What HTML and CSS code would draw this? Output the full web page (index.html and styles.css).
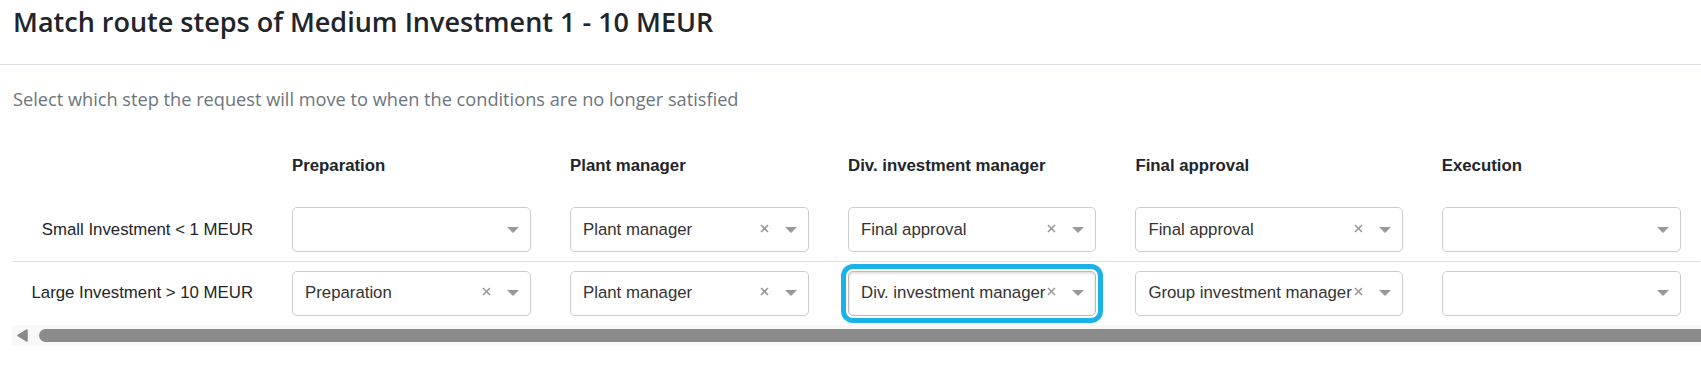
FILE: index.html
```html
<!DOCTYPE html>
<html lang="en">
<head>
    <meta charset="UTF-8">
    <meta name="viewport" content="width=device-width, initial-scale=1.0">
    <title>Match route steps</title>
    <link rel="stylesheet" href="styles.css">
</head>
<body>
    <div class="page-header">
        <h1>Match route steps of Medium Investment 1 - 10 MEUR</h1>
    </div>

    <div class="content">
        <p class="hint">Select which step the request will move to when the conditions are no longer satisfied</p>

        <div class="table-wrap">
            <table class="steps">
                <thead>
                    <tr>
                        <th></th>
                        <th>Preparation</th>
                        <th>Plant manager</th>
                        <th>Div. investment manager</th>
                        <th>Final approval</th>
                        <th>Execution</th>
                    </tr>
                </thead>
                <tbody>
                    <tr class="row">
                        <td class="label">Small Investment &lt; 1 MEUR</td>
                        <td>
                            <div class="select">
                                <span class="value"></span>
                                <svg class="arrow" width="12" height="6" viewBox="0 0 12 6"><path d="M0 0h12L6 6z"/></svg>
                            </div>
                        </td>
                        <td>
                            <div class="select">
                                <span class="value">Plant manager</span>
                                <svg class="clear" width="9" height="9" viewBox="0 0 9 9"><path d="M1 1l7 7M8 1L1 8"/></svg>
                                <svg class="arrow" width="12" height="6" viewBox="0 0 12 6"><path d="M0 0h12L6 6z"/></svg>
                            </div>
                        </td>
                        <td>
                            <div class="select">
                                <span class="value">Final approval</span>
                                <svg class="clear" width="9" height="9" viewBox="0 0 9 9"><path d="M1 1l7 7M8 1L1 8"/></svg>
                                <svg class="arrow" width="12" height="6" viewBox="0 0 12 6"><path d="M0 0h12L6 6z"/></svg>
                            </div>
                        </td>
                        <td>
                            <div class="select">
                                <span class="value">Final approval</span>
                                <svg class="clear" width="9" height="9" viewBox="0 0 9 9"><path d="M1 1l7 7M8 1L1 8"/></svg>
                                <svg class="arrow" width="12" height="6" viewBox="0 0 12 6"><path d="M0 0h12L6 6z"/></svg>
                            </div>
                        </td>
                        <td>
                            <div class="select">
                                <span class="value"></span>
                                <svg class="arrow" width="12" height="6" viewBox="0 0 12 6"><path d="M0 0h12L6 6z"/></svg>
                            </div>
                        </td>
                    </tr>
                    <tr class="row">
                        <td class="label">Large Investment &gt; 10 MEUR</td>
                        <td>
                            <div class="select">
                                <span class="value">Preparation</span>
                                <svg class="clear" width="9" height="9" viewBox="0 0 9 9"><path d="M1 1l7 7M8 1L1 8"/></svg>
                                <svg class="arrow" width="12" height="6" viewBox="0 0 12 6"><path d="M0 0h12L6 6z"/></svg>
                            </div>
                        </td>
                        <td>
                            <div class="select">
                                <span class="value">Plant manager</span>
                                <svg class="clear" width="9" height="9" viewBox="0 0 9 9"><path d="M1 1l7 7M8 1L1 8"/></svg>
                                <svg class="arrow" width="12" height="6" viewBox="0 0 12 6"><path d="M0 0h12L6 6z"/></svg>
                            </div>
                        </td>
                        <td>
                            <div class="select focused">
                                <span class="value">Div. investment manager</span>
                                <svg class="clear" width="9" height="9" viewBox="0 0 9 9"><path d="M1 1l7 7M8 1L1 8"/></svg>
                                <svg class="arrow" width="12" height="6" viewBox="0 0 12 6"><path d="M0 0h12L6 6z"/></svg>
                            </div>
                        </td>
                        <td>
                            <div class="select">
                                <span class="value">Group investment manager</span>
                                <svg class="clear" width="9" height="9" viewBox="0 0 9 9"><path d="M1 1l7 7M8 1L1 8"/></svg>
                                <svg class="arrow" width="12" height="6" viewBox="0 0 12 6"><path d="M0 0h12L6 6z"/></svg>
                            </div>
                        </td>
                        <td>
                            <div class="select">
                                <span class="value"></span>
                                <svg class="arrow" width="12" height="6" viewBox="0 0 12 6"><path d="M0 0h12L6 6z"/></svg>
                            </div>
                        </td>
                    </tr>
                </tbody>
            </table>
        </div>

        <div class="scrollbar">
            <svg class="scroll-arrow" width="11" height="13" viewBox="0 0 11 13"><path d="M10 1L1 6.5 10 12z" stroke-linejoin="round" stroke-width="1.5"/></svg>
            <div class="thumb"></div>
        </div>
    </div>
</body>
</html>
```

FILE: styles.css
```css
body {
    margin: 0;
    padding: 0;
    background: #fff;
    color: #212529;
    overflow: hidden;
}

.page-header {
    padding: 4px 13px 0;
    height: 60px;
    border-bottom: 1px solid #dee2e6;
}

.page-header h1 {
    margin: 0;
    font-family: "Open Sans", sans-serif;
    font-weight: 600;
    font-size: 27px;
    line-height: 36px;
    color: #212529;
}

.content {
    padding-left: 12px;
}

.hint {
    margin: 22px 0 0 1px;
    font-family: "Open Sans", sans-serif;
    font-size: 18.2px;
    line-height: 25px;
    color: #6c757d;
}

.table-wrap {
    margin-top: 35px;
    overflow: hidden;
}

.steps {
    border-collapse: separate;
    border-spacing: 0;
    font-family: "Liberation Sans", Arial, sans-serif;
    font-size: 16.8px;
    color: #212529;
}

.steps th {
    text-align: left;
    font-weight: bold;
    line-height: 20px;
    padding: 9px 19.5px 22px;
    white-space: nowrap;
}

.steps td {
    padding: 9px 19.5px;
    vertical-align: middle;
}

.steps .row + .row td {
    border-top: 1px solid #dee2e6;
    padding-top: 8.5px;
}

.steps .label {
    text-align: right;
    white-space: nowrap;
}

.select {
    display: flex;
    align-items: center;
    box-sizing: border-box;
    height: 45px;
    min-width: 239px;
    padding: 0 11px 0 12px;
    border: 1px solid #ccc;
    border-radius: 5px;
    background: #fff;
    color: #333;
}

.select .value {
    flex: 1;
    white-space: nowrap;
}

.select .clear {
    margin: 0 16px 3px 2px;
    stroke: #999;
    stroke-width: 1.6;
}

.select .arrow {
    fill: #999;
}

.select.focused {
    outline: 5px solid #1ab2e8;
    outline-offset: 2px;
    box-shadow: inset 0 1px 3px rgba(0, 0, 0, 0.18);
    border-color: #bbb;
}

.scrollbar {
    display: flex;
    align-items: center;
    height: 21px;
    background: #f8f8f8;
    overflow: hidden;
}

.scroll-arrow {
    margin-left: 5px;
    fill: #8a8a8a;
    stroke: #8a8a8a;
}

.thumb {
    flex: 1;
    height: 13px;
    margin: 0 -20px 0 11px;
    border-radius: 7px;
    background: #8b8b8b;
}
```
